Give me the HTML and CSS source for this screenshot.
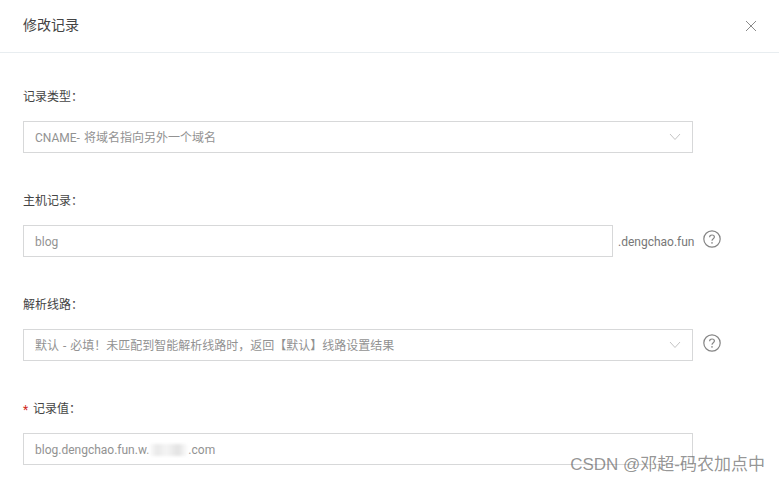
FILE: index.html
```html
<!DOCTYPE html>
<html lang="zh">
<head>
<meta charset="utf-8">
<title>修改记录</title>
<link rel="stylesheet" href="styles.css">
</head>
<body>
<div class="dialog">
  <header class="head">
    <h1 class="title">修改记录</h1>
    <svg class="close" width="12" height="12" viewBox="0 0 12 12"><path d="M1 1L11 11M11 1L1 11" stroke="#8a8a8a" stroke-width="1" fill="none"/></svg>
  </header>
  <main class="form">
    <section class="field">
      <label class="label">记录类型：</label>
      <div class="row">
        <div class="box select"><span class="value">CNAME- 将域名指向另外一个域名</span>
          <svg class="chev" width="12" height="8" viewBox="0 0 12 8"><path d="M1 1L6 6.5L11 1" stroke="#c4c4c4" fill="none"/></svg>
        </div>
      </div>
    </section>
    <section class="field">
      <label class="label">主机记录：</label>
      <div class="row">
        <div class="box host"><span class="value">blog</span></div>
        <span class="suffix">.dengchao.fun</span>
        <svg class="help" width="18" height="18" viewBox="0 0 18 18"><circle cx="9" cy="9" r="8.2" stroke="#858585" stroke-width="1.2" fill="none"/><path d="M6.6 7.2C6.6 5.8 7.7 5 9 5C10.3 5 11.4 5.8 11.4 7C11.4 8.6 9 8.8 9 10.7" stroke="#858585" stroke-width="1.2" fill="none"/><circle cx="9" cy="12.9" r=".8" fill="#858585"/></svg>
      </div>
    </section>
    <section class="field">
      <label class="label">解析线路：</label>
      <div class="row">
        <div class="box select"><span class="value">默认 - 必填！未匹配到智能解析线路时，返回【默认】线路设置结果</span>
          <svg class="chev" width="12" height="8" viewBox="0 0 12 8"><path d="M1 1L6 6.5L11 1" stroke="#c4c4c4" fill="none"/></svg>
        </div>
        <svg class="help" width="18" height="18" viewBox="0 0 18 18"><circle cx="9" cy="9" r="8.2" stroke="#858585" stroke-width="1.2" fill="none"/><path d="M6.6 7.2C6.6 5.8 7.7 5 9 5C10.3 5 11.4 5.8 11.4 7C11.4 8.6 9 8.8 9 10.7" stroke="#858585" stroke-width="1.2" fill="none"/><circle cx="9" cy="12.9" r=".8" fill="#858585"/></svg>
      </div>
    </section>
    <section class="field">
      <label class="label"><span class="req">*</span>记录值：</label>
      <div class="row">
        <div class="box select"><span class="value">blog.dengchao.fun.w.<span class="masked"></span>.com</span></div>
      </div>
    </section>
  </main>
  <div class="mark">CSDN @邓超-码农加点中</div>
</div>
</body>
</html>
```
FILE: styles.css
```css
* { box-sizing: border-box; }
html, body { margin: 0; height: 100%; }
body {
  background: #fff;
  font-family: Roboto, "Noto Sans CJK SC", sans-serif;
  overflow: hidden;
}
.dialog { position: relative; width: 779px; height: 483px; overflow: hidden; }
.head {
  height: 53px;
  border-bottom: 1px solid #e8edf0;
  padding: 0 22px 0 23px;
  display: flex;
  align-items: center;
  justify-content: space-between;
}
.title { margin: 0; font-size: 14px; font-weight: 400; color: #444; line-height: 20px; position: relative; top: -1px; }
.close { display: block; }
.form { padding: 0 0 0 23px; }
.field { height: 104px; padding-top: 34px; }
.label { display: block; height: 20px; line-height: 20px; font-size: 12px; color: #444; margin-bottom: 14px; }
.req { display: inline-block; width: 10px; color: #d0281c; font-size: 12px; position: relative; top: 1px; }
.row { display: flex; align-items: center; }
.box {
  height: 32px;
  border: 1px solid #d7d8d9;
  padding: 0 11px;
  display: flex;
  align-items: center;
  justify-content: space-between;
  font-size: 12px;
  color: #929292;
}
.select { width: 670px; }
.host { width: 590px; }
.value { display: flex; align-items: center; line-height: 16px; white-space: pre; word-spacing: 1px; position: relative; top: 1px; }
.chev { display: block; }
.suffix { font-size: 12px; color: #777; margin-left: 5px; width: 75px; white-space: nowrap; position: relative; top: 1px; }
.help { display: block; margin-left: 10px; position: relative; top: -2px; }
.masked {
  display: inline-block;
  width: 39px;
  height: 12px;
  background: linear-gradient(90deg, #fff 0, #e9e9e9 20%, #f4f4f4 45%, #e2e2e2 75%, #fff 100%);
  filter: blur(1.5px);
}
.mark {
  position: absolute;
  right: 14px;
  top: 455px;
  font-family: "Liberation Sans", "Noto Sans CJK SC", sans-serif;
  font-size: 17px;
  line-height: 20px;
  color: rgba(80, 80, 80, .62);
  white-space: nowrap;
}
```
